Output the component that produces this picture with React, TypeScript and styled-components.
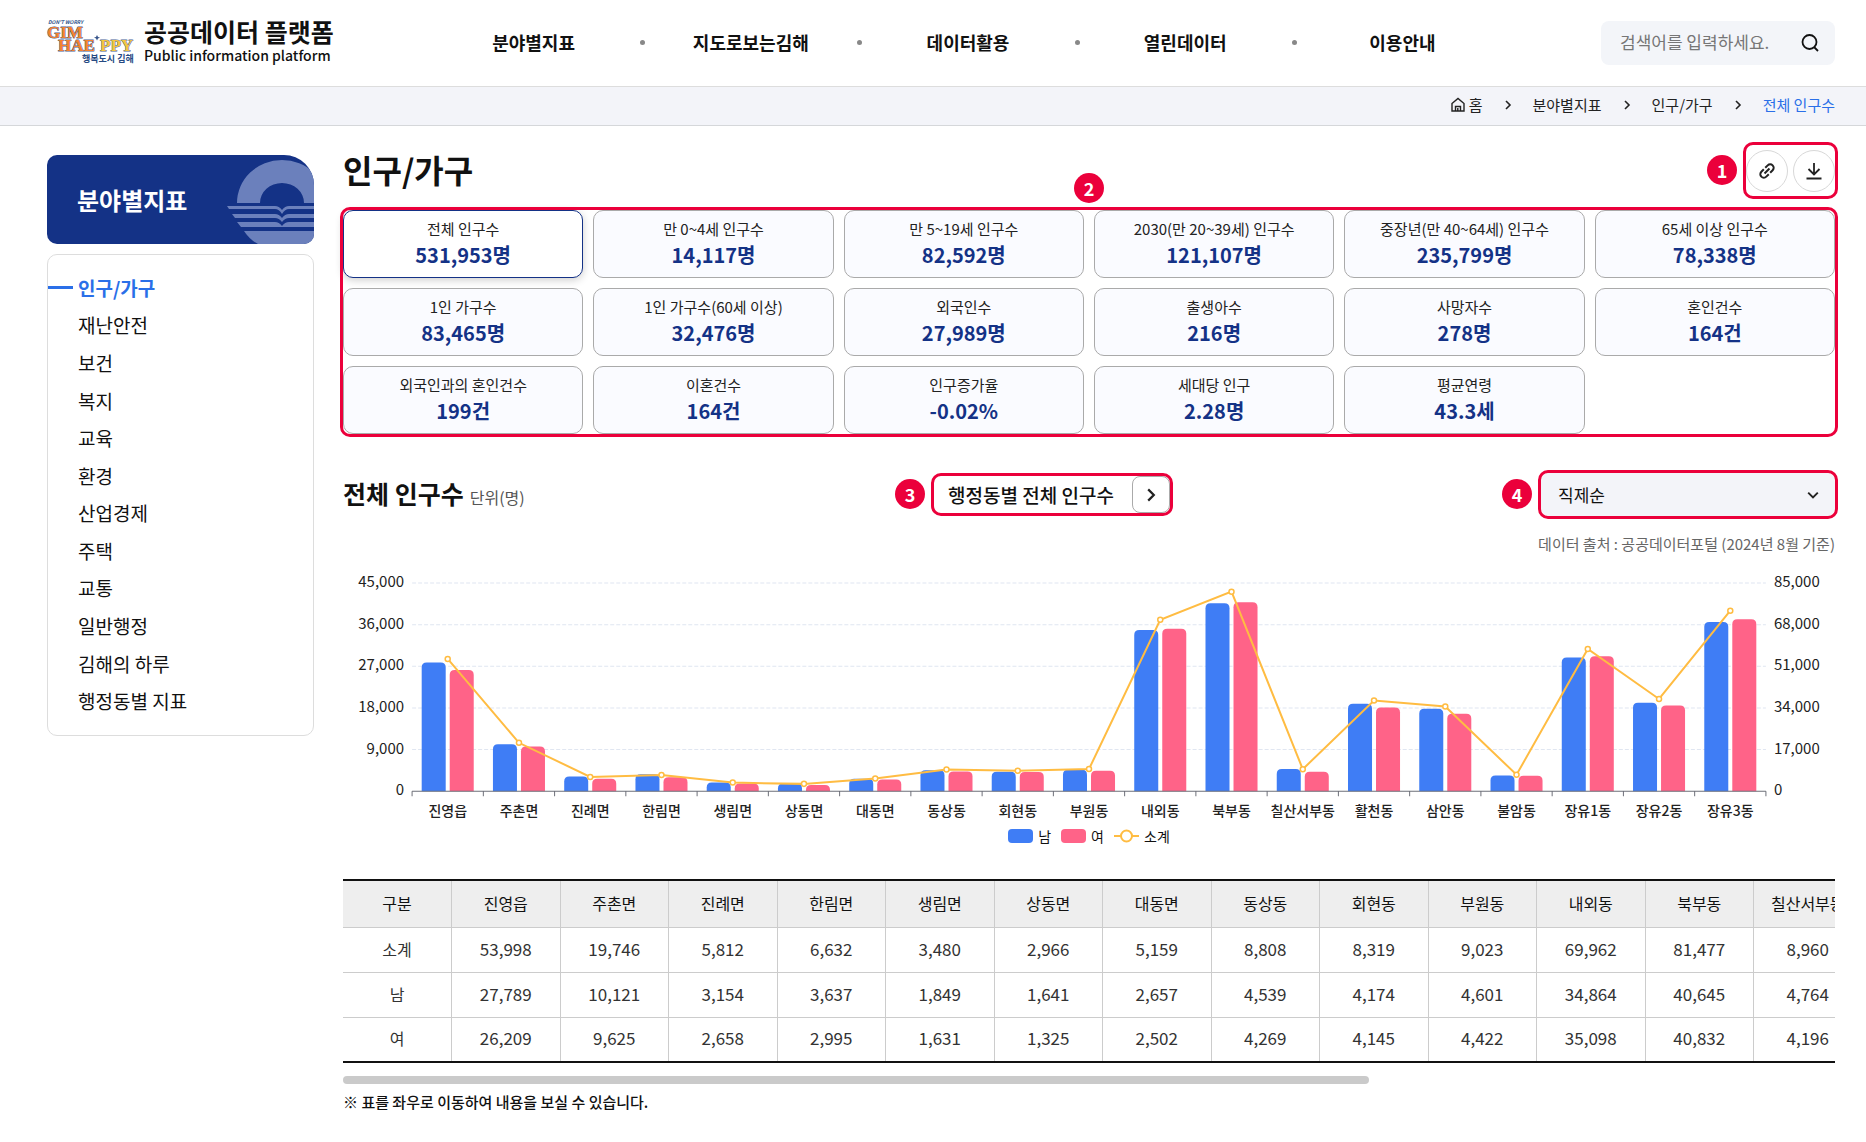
import React, { useLayoutEffect, useRef, useState } from 'react';
import styled, { createGlobalStyle, css } from 'styled-components';

const navy = '#143286';
const blue = '#2a6fe8';
const red = '#eb003b';
const font = '"Noto Sans CJK KR", "Noto Sans", sans-serif';

const GlobalStyle = createGlobalStyle`
  *, *::before, *::after { box-sizing: border-box; }
  body { margin: 0; background: #fff; color: #111; font: 400 16px/24px ${font}; }
  button, input, select { font: inherit; color: inherit; }
  a { color: inherit; text-decoration: none; }
  ul, ol { list-style: none; margin: 0; padding: 0; }
  h1, h2, p, dl, dd { margin: 0; }
`;

const Header = styled.header`
  display: grid;
  grid-template-columns: 378px 1fr 234px;
  align-items: center;
  height: 87px;
  padding: 0 31px 0 47px;
  border-bottom: 1px solid #ddd;
`;
const Brand = styled.a`
  display: flex;
  align-items: center;
  gap: 10px;
`;
const BrandName = styled.span`
  display: flex;
  flex-direction: column;
  padding-bottom: 4px;
  font-size: 14px;
  line-height: 20px;
  font-weight: 500;
  strong { font-size: 25px; line-height: 28px; font-weight: 700; }
`;
const MainNav = styled.ul`
  display: flex;
  width: 1086px;
  max-width: 100%;
  padding-bottom: 2px;
`;
const MainNavItem = styled.li`
  flex: 1;
  display: flex;
  justify-content: center;
  position: relative;
  font-size: 18px;
  font-weight: 700;
  & + &::before {
    content: '';
    position: absolute;
    left: -2px;
    top: 10px;
    width: 5px;
    height: 5px;
    border-radius: 50%;
    background: #888;
  }
`;
const Search = styled.form`
  display: flex;
  align-items: center;
  height: 44px;
  padding: 0 15px 0 19px;
  border-radius: 8px;
  background: #f3f5f9;
`;
const SearchInput = styled.input`
  flex: 1;
  min-width: 0;
  border: 0;
  padding: 0 0 2px;
  outline: 0;
  background: none;
  font-size: 17px;
  &::placeholder { color: #767676; opacity: 1; }
`;
const PlainButton = styled.button`
  display: flex;
  padding: 0;
  border: 0;
  background: none;
`;

const CrumbBar = styled.nav`
  height: 39px;
  padding: 0 31px 0 47px;
  background: #f3f4f9;
  border-bottom: 1px solid #d5d7da;
`;
const Crumbs = styled.ol`
  display: flex;
  justify-content: flex-end;
  align-items: center;
  height: 36px;
  font-size: 15px;
`;
const Crumb = styled.li<{ $current?: boolean }>`
  display: flex;
  align-items: center;
  color: ${(p) => (p.$current ? blue : '#222')};
  a { display: flex; align-items: center; gap: 4px; }
  & > svg { margin: 0 20px; }
`;

const Page = styled.div`
  display: grid;
  grid-template-columns: 267px minmax(0, 1fr);
  gap: 29px;
  align-items: start;
  padding: 29px 31px 24px 47px;
`;
const Side = styled.aside`
  display: flex;
  flex-direction: column;
  gap: 10px;
`;
const SideBanner = styled.div`
  display: flex;
  align-items: center;
  justify-content: space-between;
  height: 89px;
  padding-left: 30px;
  border-radius: 10px 30px 10px 10px;
  overflow: hidden;
  background: ${navy};
  color: #fff;
  font-size: 24px;
  font-weight: 700;
  svg { align-self: stretch; }
`;
const SideList = styled.ul`
  display: grid;
  grid-auto-rows: 1fr;
  min-height: 482px;
  padding: 14px 0 15px;
  border: 1px solid #ddd;
  border-radius: 10px;
`;
const SideItem = styled.li<{ $active?: boolean }>`
  display: flex;
  align-items: center;
  font-size: 19px;
  a { padding-left: 30px; }
  ${(p) =>
    p.$active &&
    css`
      color: ${blue};
      font-weight: 700;
      &::before { content: ''; width: 25px; height: 3px; background: ${blue}; }
      a { padding-left: 5px; }
    `}
`;

const TitleRow = styled.div`
  display: flex;
  justify-content: space-between;
  height: 55px;
  h1 { font-size: 32px; line-height: 28px; font-weight: 700; }
`;
const Badge = styled.span`
  display: flex;
  align-items: center;
  justify-content: center;
  flex: none;
  width: 30px;
  height: 30px;
  border-radius: 50%;
  background: ${red};
  color: #fff;
  font: 700 18px/30px ${font};
`;
const Marked = styled.div`
  position: relative;
  &::after {
    content: '';
    position: absolute;
    inset: -3px;
    border: 3px solid ${red};
    border-radius: 10px;
    pointer-events: none;
  }
`;
const SideBadge = styled(Badge)`
  position: absolute;
  right: calc(100% + 9px);
  top: calc(50% - 16px);
`;
const TopBadge = styled(Badge)`
  position: absolute;
  left: calc(50% - 15px);
  top: -37px;
`;
const Tools = styled(Marked)`
  display: flex;
  align-items: center;
  align-self: flex-start;
  gap: 5px;
  height: 51px;
  margin-top: -10px;
`;
const RoundButton = styled.button`
  display: flex;
  align-items: center;
  justify-content: center;
  width: 42px;
  height: 42px;
  padding: 0;
  border: 1px solid #d8d8d8;
  border-radius: 50%;
  background: #fff;
`;
const Stats = styled.div`
  display: grid;
  grid-template-columns: repeat(6, minmax(0, 1fr));
  gap: 10px;
`;
const Stat = styled.button<{ $active?: boolean }>`
  display: flex;
  flex-direction: column;
  align-items: center;
  justify-content: center;
  height: 68px;
  padding: 0 0 3px;
  border: 1px solid ${(p) => (p.$active ? navy : '#aaa')};
  border-radius: 10px;
  background: ${(p) => (p.$active ? '#fff' : '#fafbff')};
  box-shadow: ${(p) => (p.$active ? '0 2px 8px rgba(0, 0, 0, 0.2)' : 'none')};
  color: #222;
  font-size: 15px;
  line-height: 24px;
  strong { color: ${navy}; font-size: 20px; line-height: 28px; font-weight: 700; }
`;

const SectionRow = styled.div`
  display: grid;
  grid-template-columns: 8fr auto 9fr;
  align-items: center;
  margin-top: 39px;
`;
const SectionTitle = styled.h2`
  font-size: 25px;
  line-height: 32px;
  font-weight: 700;
  span { margin-left: 6px; font-size: 16px; font-weight: 400; color: #555; }
`;
const MoreLink = styled.button`
  display: flex;
  align-items: center;
  gap: 18px;
  height: 37px;
  padding: 0 0 0 14px;
  border: 0;
  background: none;
  font-size: 19px;
  font-weight: 500;
`;
const MoreArrow = styled.span`
  display: flex;
  align-items: center;
  justify-content: center;
  width: 38px;
  height: 37px;
  border: 1px solid #aaa;
  border-radius: 8px;
`;
const SortBox = styled(Marked)`
  justify-self: end;
  display: flex;
  align-items: center;
  svg { position: absolute; right: 16px; pointer-events: none; }
`;
const SortSelect = styled.select`
  appearance: none;
  width: 294px;
  height: 43px;
  padding: 0 40px 0 17px;
  border: 0;
  border-radius: 8px;
  background: #f3f4f9;
  font-size: 17px;
`;
const Source = styled.p`
  margin-top: 16px;
  text-align: right;
  font-size: 15px;
  color: #666;
`;

const ChartSvg = styled.svg`
  display: block;
  width: 100%;
  height: auto;
  margin-top: 13px;
  text { font-family: ${font}; font-size: 14px; font-weight: 500; fill: #222; }
  .value { font-size: 15px; font-weight: 400; }
`;
const Legend = styled.ul`
  display: flex;
  justify-content: center;
  gap: 10px;
  padding-top: 1px;
  font-size: 14px;
  line-height: 24px;
  li { display: flex; align-items: center; gap: 5px; }
`;
const Swatch = styled.i<{ $color: string }>`
  width: 25px;
  height: 14px;
  border-radius: 4px;
  background: ${(p) => p.$color};
`;

const TableScroll = styled.div`
  margin-top: 31px;
  overflow-x: auto;
  scrollbar-width: none;
`;
const Table = styled.table`
  width: 2170px;
  table-layout: fixed;
  border-collapse: collapse;
  border-top: 2px solid #111;
  border-bottom: 2px solid #111;
  text-align: center;
  font-size: 17px;
  th, td { height: 45px; padding: 0 0 2px; white-space: nowrap; color: #333; }
  th { font-size: 16px; font-weight: 400; }
  thead th { height: 47px; background: #eee; color: #111; }
  tr + tr > *, tbody tr > * { border-top: 1px solid #ccc; }
  tr > * + * { border-left: 1px solid #ccc; }
`;
const ScrollThumb = styled.div`
  height: 8px;
  margin-top: 13px;
  border-radius: 4px;
  background: #cacaca;
`;
const Note = styled.p`
  margin-top: 6px;
  font-size: 15px;
  font-weight: 500;
`;

const nav = ['분야별지표', '지도로보는김해', '데이터활용', '열린데이터', '이용안내'];
const topics = ['인구/가구', '재난안전', '보건', '복지', '교육', '환경', '산업경제', '주택', '교통', '일반행정', '김해의 하루', '행정동별 지표'];
const stats = [
  ['전체 인구수', '531,953명'], ['만 0~4세 인구수', '14,117명'], ['만 5~19세 인구수', '82,592명'],
  ['2030(만 20~39세) 인구수', '121,107명'], ['중장년(만 40~64세) 인구수', '235,799명'], ['65세 이상 인구수', '78,338명'],
  ['1인 가구수', '83,465명'], ['1인 가구수(60세 이상)', '32,476명'], ['외국인수', '27,989명'],
  ['출생아수', '216명'], ['사망자수', '278명'], ['혼인건수', '164건'],
  ['외국인과의 혼인건수', '199건'], ['이혼건수', '164건'], ['인구증가율', '-0.02%'],
  ['세대당 인구', '2.28명'], ['평균연령', '43.3세'],
];
const districts: [string, number, number][] = [
  ['진영읍', 27789, 26209], ['주촌면', 10121, 9625], ['진례면', 3154, 2658], ['한림면', 3637, 2995],
  ['생림면', 1849, 1631], ['상동면', 1641, 1325], ['대동면', 2657, 2502], ['동상동', 4539, 4269],
  ['회현동', 4174, 4145], ['부원동', 4601, 4422], ['내외동', 34864, 35098], ['북부동', 40645, 40832],
  ['칠산서부동', 4764, 4196], ['활천동', 18895, 18100], ['삼안동', 17815, 16730], ['불암동', 3390, 3317],
  ['장유1동', 28920, 29140], ['장유2동', 19110, 18540], ['장유3동', 36570, 37150],
];
const fmt = (n: number) => n.toLocaleString('en-US');

function Chevron({ size = 10, down = false }: { size?: number; down?: boolean }) {
  return (
    <svg width={size} height={size} viewBox="0 0 10 10" fill="none" stroke="#222" strokeWidth="1.6" aria-hidden="true">
      <path d={down ? 'M1 3l4 4 4-4' : 'M3 1l4 4-4 4'} />
    </svg>
  );
}

const LogoSvg = styled.svg`
  flex: none;
  overflow: visible;
  text { font-weight: 700; paint-order: stroke; stroke-linejoin: round; }
  .big { font-family: "Liberation Serif", serif; font-size: 17px; fill: #f5822d; stroke: #4a659a; stroke-width: 1px; }
  .gold { fill: #f4c63d; }
  .small { font-family: ${font}; font-size: 9px; fill: #274a83; }
  .tiny { font-family: ${font}; font-size: 5px; font-style: italic; fill: #33558c; }
`;
function Logo() {
  return (
    <LogoSvg width="87" height="46" viewBox="0 0 87 46" role="img" aria-label="김해시">
      <text className="tiny" x="1" y="4">DON'T WORRY</text>
      <text className="big" x="0" y="18">GIM</text>
      <text className="big" x="11" y="31">HAE</text>
      <text className="big gold" x="53" y="31">PPY</text>
      <path d="M50 15l1 2 2 .500-2 1-1 2-1-2-2-1 2-.500z" fill="#36548a" />
      <text className="small" x="35" y="42">행복도시 김해</text>
    </LogoSvg>
  );
}

function Emblem() {
  return (
    <svg width="87" height="89" viewBox="0 0 87 89" aria-hidden="true">
      <g fill="#6b80bc">
        <path d="M10 48A45 43 0 0 1 100 48H77A22 20 0 0 0 33 48Z" />
        <path d="M0 51h48q4 0 7 4q3-4 7-4h25v3H62q-4 0-7 5q-3-5-7-5H2Z" />
        <path d="M5 59h43q4 0 7 4q3-4 7-4h25v4H62q-4 0-7 4q-3-4-7-4H8Z" />
        <path d="M10 67h38q4 0 7 4q3-4 7-4h25v5H14Z" />
        <path d="M17 76h70v13H31Q23 85 17 76Z" />
      </g>
    </svg>
  );
}

const W = 1491, X0 = 69, X1 = 1422, Y0 = 222, H = 208;
function Chart() {
  const step = (X1 - X0) / districts.length;
  const y = (v: number, max: number) => Y0 - (v / max) * H;
  const bar = (x: number, v: number) => {
    const t = y(v, 45000);
    return `M${x} ${Y0}V${t + 5}q0-5 5-5h14q5 0 5 5V${Y0}Z`;
  };
  const points = districts.map(([, m, f], i) => [X0 + step * (i + 0.5), y(m + f, 85000)]);
  return (
    <ChartSvg viewBox={`0 0 ${W} 254`} role="img" aria-label="행정동별 전체 인구수">
      {[0, 1, 2, 3, 4, 5].map((i) => {
        const gy = Y0 - (H / 5) * i;
        return (
          <g key={i}>
            {i > 0 && <line x1={X0} x2={X1} y1={gy} y2={gy} stroke="#e0e6f1" strokeDasharray="4 2" />}
            <text className="value" x="61" y={gy + 4} textAnchor="end">{fmt(i * 9000)}</text>
            <text className="value" x="1430" y={gy + 4}>{fmt(i * 17000)}</text>
          </g>
        );
      })}
      {districts.map(([name, m, f], i) => {
        const c = X0 + step * (i + 0.5);
        return (
          <g key={name}>
            <path d={bar(c - 26, m)} fill="#3f7df5" />
            <path d={bar(c + 2, f)} fill="#ff6388" />
            <text x={c} y={Y0 + 25} textAnchor="middle">{name}</text>
          </g>
        );
      })}
      <path d={`M${X0} ${Y0}H${X1}` + [...districts, 0].map((_, i) => `M${X0 + step * i} ${Y0}v5`).join('')} stroke="#6e7079" fill="none" />
      <polyline points={points.map((p) => p.join(',')).join(' ')} fill="none" stroke="#ffbc42" strokeWidth="2" />
      {points.map(([px, py]) => <circle key={px} cx={px} cy={py} r="2.5" fill="#fff" stroke="#ffbc42" strokeWidth="1.5" />)}
    </ChartSvg>
  );
}

function DataTable() {
  const ref = useRef<HTMLDivElement>(null);
  const [thumb, setThumb] = useState({ width: 0, left: 0 });
  const measure = () => {
    const el = ref.current;
    if (el) setThumb({ width: (el.clientWidth / el.scrollWidth) * 100, left: (el.scrollLeft / el.scrollWidth) * 100 });
  };
  useLayoutEffect(() => {
    measure();
    window.addEventListener('resize', measure);
    return () => window.removeEventListener('resize', measure);
  }, []);
  const rows: [string, (d: [string, number, number]) => number][] = [
    ['소계', (d) => d[1] + d[2]], ['남', (d) => d[1]], ['여', (d) => d[2]],
  ];
  return (
    <>
      <TableScroll ref={ref} onScroll={measure}>
        <Table>
          <thead>
            <tr><th scope="col">구분</th>{districts.map((d) => <th scope="col" key={d[0]}>{d[0]}</th>)}</tr>
          </thead>
          <tbody>
            {rows.map(([label, get]) => (
              <tr key={label}><th scope="row">{label}</th>{districts.map((d) => <td key={d[0]}>{fmt(get(d))}</td>)}</tr>
            ))}
          </tbody>
        </Table>
      </TableScroll>
      <ScrollThumb style={{ width: `${thumb.width}%`, marginLeft: `${thumb.left}%` }} />
    </>
  );
}

export default function App() {
  return (
    <>
      <GlobalStyle />
      <Header>
        <Brand href="#">
          <Logo />
          <BrandName><strong>공공데이터 플랫폼</strong>Public information platform</BrandName>
        </Brand>
        <nav>
          <MainNav>{nav.map((n) => <MainNavItem key={n}><a href="#">{n}</a></MainNavItem>)}</MainNav>
        </nav>
        <Search>
          <SearchInput aria-label="검색어" placeholder="검색어를 입력하세요." />
          <PlainButton type="button" aria-label="검색">
            <svg width="20" height="20" viewBox="0 0 20 20" fill="none" stroke="#111" strokeWidth="1.8"><circle cx="9.5" cy="9" r="7" /><path d="M14 14l4 4" /></svg>
          </PlainButton>
        </Search>
      </Header>
      <CrumbBar aria-label="현재 위치">
        <Crumbs>
          <Crumb>
            <a href="#">
              <svg width="14" height="16" viewBox="0 0 14 16" fill="none" stroke="#222" strokeWidth="1.4"><path d="M1 6.500L7 1.500l6 5V14H1ZM4.500 14V9.500h5V14M6.800 11v3" /></svg>
              홈
            </a>
            <Chevron />
          </Crumb>
          <Crumb><a href="#">분야별지표</a><Chevron /></Crumb>
          <Crumb><a href="#">인구/가구</a><Chevron /></Crumb>
          <Crumb $current><a href="#" aria-current="page">전체 인구수</a></Crumb>
        </Crumbs>
      </CrumbBar>
      <Page>
        <Side>
          <SideBanner>분야별지표<Emblem /></SideBanner>
          <SideList>
            {topics.map((t, i) => <SideItem key={t} $active={i === 0}><a href="#">{t}</a></SideItem>)}
          </SideList>
        </Side>
        <main>
          <TitleRow>
            <h1>인구/가구</h1>
            <Tools>
              <SideBadge>1</SideBadge>
              <RoundButton aria-label="링크 복사">
                <svg width="20" height="20" viewBox="0 0 20 20" fill="none" stroke="#222" strokeWidth="2">
                  <path transform="rotate(-45 10 10)" d="M9 6.500H5.500a3.500 3.500 0 0 0 0 7H9M11 6.500h3.500a3.500 3.500 0 0 1 0 7H11M6.500 10h7" />
                </svg>
              </RoundButton>
              <RoundButton aria-label="내려받기">
                <svg width="18" height="18" viewBox="0 0 18 18" fill="none" stroke="#222" strokeWidth="1.8"><path d="M9 1v11M3.500 7L9 12.500 14.500 7M1.500 16.500h15" /></svg>
              </RoundButton>
            </Tools>
          </TitleRow>
          <Marked>
            <TopBadge>2</TopBadge>
            <Stats>
              {stats.map(([label, value], i) => (
                <Stat key={label} $active={i === 0}><span>{label}</span><strong>{value}</strong></Stat>
              ))}
            </Stats>
          </Marked>
          <SectionRow>
            <SectionTitle>전체 인구수<span>단위(명)</span></SectionTitle>
            <Marked>
              <SideBadge>3</SideBadge>
              <MoreLink>행정동별 전체 인구수<MoreArrow><Chevron size={14} /></MoreArrow></MoreLink>
            </Marked>
            <SortBox>
              <SideBadge>4</SideBadge>
              <SortSelect aria-label="정렬"><option>직제순</option></SortSelect>
              <Chevron size={12} down />
            </SortBox>
          </SectionRow>
          <Source>데이터 출처 : 공공데이터포털 (2024년 8월 기준)</Source>
          <Chart />
          <Legend>
            <li><Swatch $color="#3f7df5" />남</li>
            <li><Swatch $color="#ff6388" />여</li>
            <li>
              <svg width="25" height="14" viewBox="0 0 25 14" fill="#fff" stroke="#ffbc42" strokeWidth="2"><path d="M0 7h25" /><circle cx="12.500" cy="7" r="5.500" /></svg>
              소계
            </li>
          </Legend>
          <DataTable />
          <Note>※ 표를 좌우로 이동하여 내용을 보실 수 있습니다.</Note>
        </main>
      </Page>
    </>
  );
}
